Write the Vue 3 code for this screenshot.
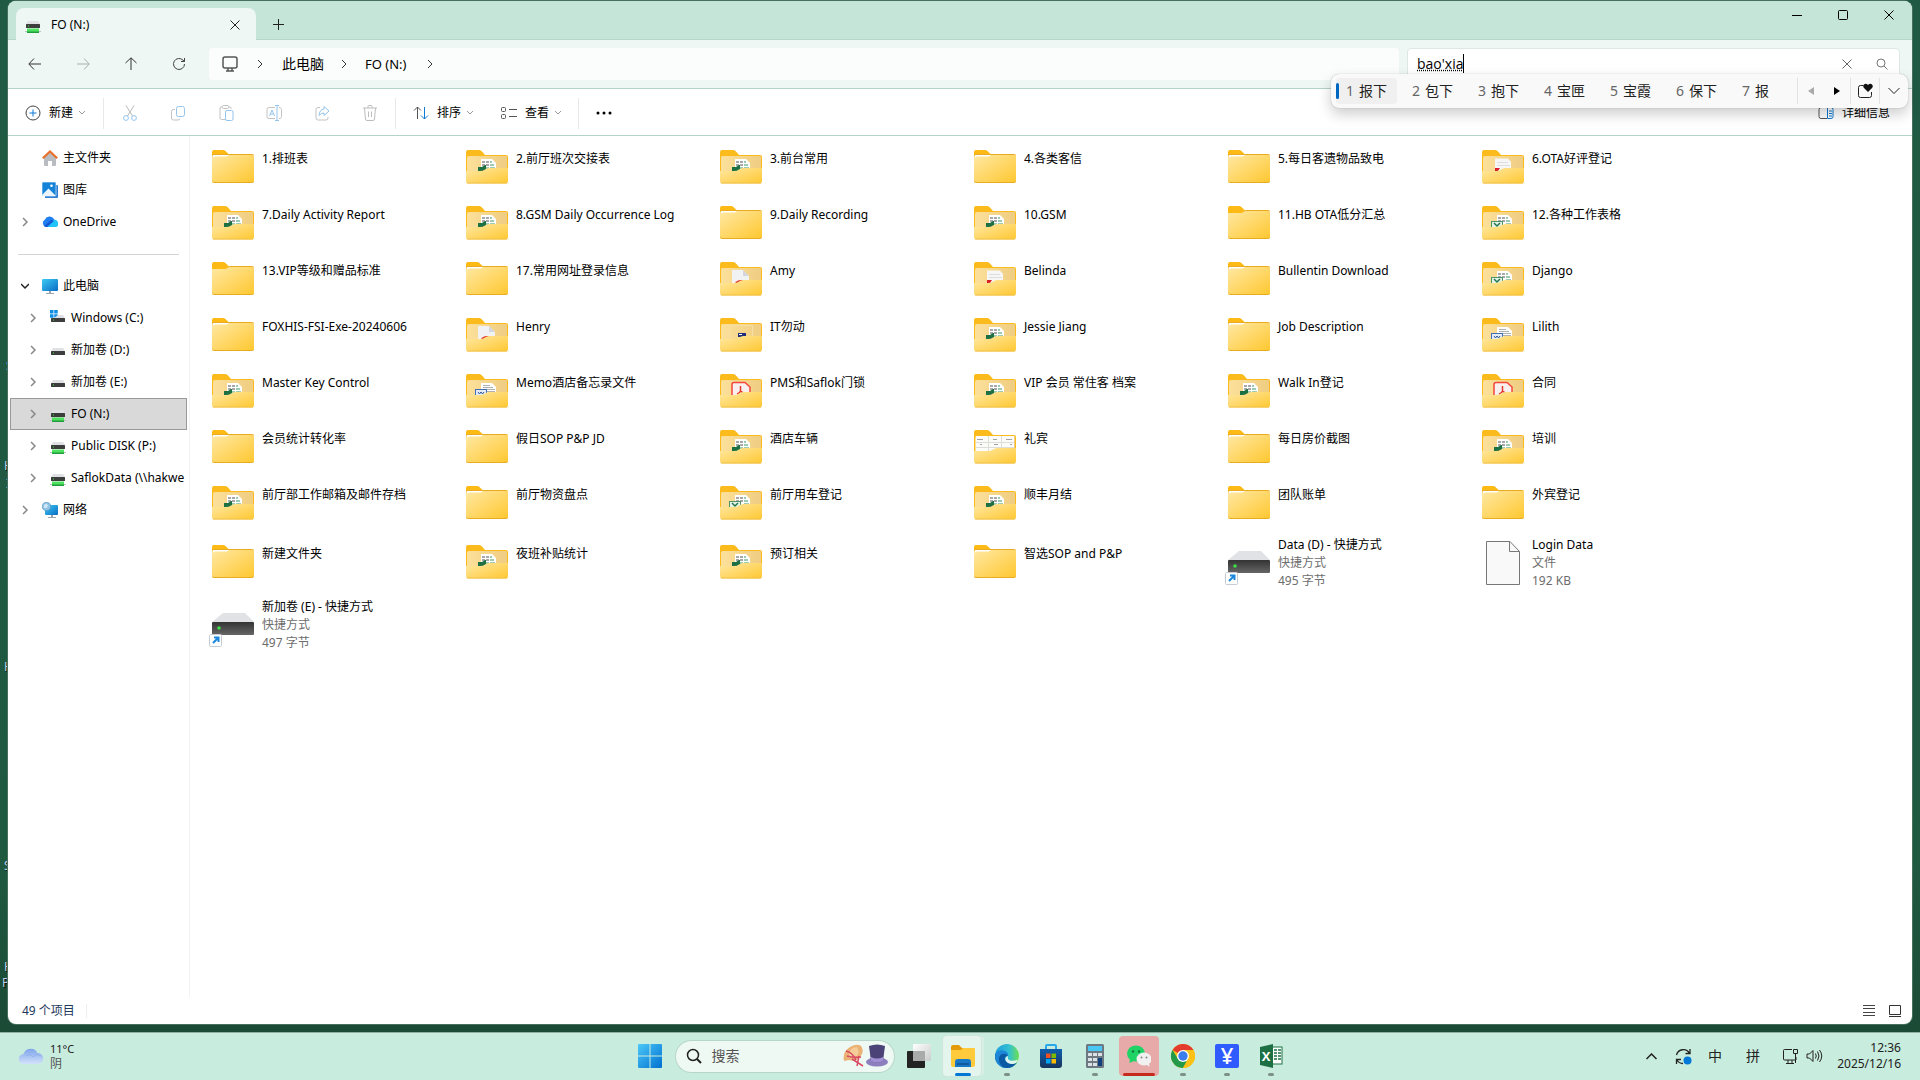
<script setup>
import { ref } from 'vue'

const query = ref("bao'xia")

const candidates = ['报下', '包下', '抱下', '宝匣', '宝霞', '保下', '报']

const places = [
  { name: '主文件夹', icon: 'home' },
  { name: '图库', icon: 'gallery' },
  { name: 'OneDrive', icon: 'onedrive', branch: true }
]

const tree = [
  { name: '此电脑', icon: 'pc', open: true },
  { name: 'Windows (C:)', icon: 'disk-win', child: true },
  { name: '新加卷 (D:)', icon: 'disk', child: true },
  { name: '新加卷 (E:)', icon: 'disk', child: true },
  { name: 'FO (N:)', icon: 'disk-net', child: true, active: true },
  { name: 'Public DISK (P:)', icon: 'disk-net', child: true },
  { name: 'SaflokData (\\\\hakwe', icon: 'disk-net', child: true },
  { name: '网络', icon: 'network' }
]

const files = [
  ['1.排班表', 'paper'], ['2.前厅班次交接表', 'xls'], ['3.前台常用', 'xls'],
  ['4.各类客信', 'paper'], ['5.每日客遗物品致电', 'paper'], ['6.OTA好评登记', 'red'],
  ['7.Daily Activity Report', 'xls'], ['8.GSM Daily Occurrence Log', 'xls'], ['9.Daily Recording', 'paper'],
  ['10.GSM', 'xls'], ['11.HB OTA低分汇总', 'empty'], ['12.各种工作表格', 'xlsx'],
  ['13.VIP等级和赠品标准', 'empty'], ['17.常用网址登录信息', 'paper'], ['Amy', 'pdf'],
  ['Belinda', 'red'], ['Bullentin Download', 'paper'], ['Django', 'xlsx'],
  ['FOXHIS-FSI-Exe-20240606', 'paper'], ['Henry', 'pdf'], ['IT勿动', 'exe'],
  ['Jessie Jiang', 'xls'], ['Job Description', 'paper'], ['Lilith', 'doc'],
  ['Master Key Control', 'xls'], ['Memo酒店备忘录文件', 'doc'], ['PMS和Saflok门锁', 'acrobat'],
  ['VIP 会员 常住客 档案', 'xls'], ['Walk In登记', 'xls'], ['合同', 'acrobat'],
  ['会员统计转化率', 'paper'], ['假日SOP P&P JD', 'paper'], ['酒店车辆', 'xls'],
  ['礼宾', 'sheet'], ['每日房价截图', 'paper'], ['培训', 'xls'],
  ['前厅部工作邮箱及邮件存档', 'xls'], ['前厅物资盘点', 'paper'], ['前厅用车登记', 'xlsx'],
  ['顺丰月结', 'xls'], ['团队账单', 'paper'], ['外宾登记', 'paper'],
  ['新建文件夹', 'paper'], ['夜班补贴统计', 'xls'], ['预订相关', 'xls'],
  ['智选SOP and P&P', 'paper'],
  ['Data (D) - 快捷方式', 'drive', '快捷方式', '495 字节'],
  ['Login Data', 'file', '文件', '192 KB'],
  ['新加卷 (E) - 快捷方式', 'drive', '快捷方式', '497 字节']
].map(([name, kind, type, size]) => ({ name, kind, type, size }))

const plain = ['paper', 'empty']
const isFolder = (kind) => kind !== 'drive' && kind !== 'file'

const apps = [
  { id: 'explorer', label: '文件资源管理器', state: 'current' },
  { id: 'edge', label: 'Edge', state: 'running' },
  { id: 'store', label: 'Microsoft Store', state: '' },
  { id: 'calc', label: '计算器', state: 'running' },
  { id: 'wechat', label: '微信', state: 'alert' },
  { id: 'chrome', label: 'Chrome', state: 'running' },
  { id: 'yen', label: '收银', state: 'running' },
  { id: 'excel', label: 'Excel', state: 'running' }
]

const edits = ['cut', 'copy', 'paste', 'rename', 'share', 'delete']
const editLabels = ['剪切', '复制', '粘贴', '重命名', '共享', '删除']
</script>

<template>
  <svg class="sprite" aria-hidden="true">
    <defs>
      <linearGradient id="gFront" x1="0" y1="0" x2="1" y2="1">
        <stop offset="0" stop-color="#ffe8a3" /><stop offset="1" stop-color="#ffc831" />
      </linearGradient>
      <linearGradient id="gInner" x1="0" y1="0" x2="1" y2="0">
        <stop offset="0" stop-color="#fce09a" /><stop offset="1" stop-color="#efcd82" />
      </linearGradient>
      <linearGradient id="gDark" x1="0" y1="0" x2="0" y2="1">
        <stop offset="0" stop-color="#333" /><stop offset="1" stop-color="#666" />
      </linearGradient>
      <linearGradient id="gBlue" x1="0" y1="0" x2="1" y2="1">
        <stop offset="0" stop-color="#3ccbf4" /><stop offset="1" stop-color="#0a6cc4" />
      </linearGradient>
      <linearGradient id="gWin" x1="0" y1="0" x2="1" y2="1">
        <stop offset="0" stop-color="#4cc8f8" /><stop offset="1" stop-color="#0070d0" />
      </linearGradient>
      <linearGradient id="gCloud" x1="0" y1="0" x2="0" y2="1">
        <stop offset="0" stop-color="#7ea4ea" /><stop offset="1" stop-color="#d3e2fb" />
      </linearGradient>
      <linearGradient id="gEdge" x1="0" y1="0" x2="1" y2="0">
        <stop offset="0" stop-color="#1d9be0" /><stop offset="0.6" stop-color="#35c1d0" /><stop offset="1" stop-color="#6be04e" />
      </linearGradient>
      <linearGradient id="gStore" x1="0" y1="0" x2="0" y2="1">
        <stop offset="0" stop-color="#0f5fae" /><stop offset="1" stop-color="#17335c" />
      </linearGradient>
      <linearGradient id="gGrey" x1="0" y1="0" x2="1" y2="1">
        <stop offset="0" stop-color="#fff" /><stop offset="1" stop-color="#c9cccc" />
      </linearGradient>
    </defs>

    <symbol id="k-xls" viewBox="0 0 42 34">
      <path d="M15 9H26L30 13V22H15Z" fill="#fff" />
      <path d="M16 11h3v2h-3zM20 11h3v2h-3zM16 14h3v2h-3zM20 14h3v2h-3z" fill="#a8a8a8" />
      <path d="M24 11h2v2h-2zM24 14h4v2h-4zM20 17h3v2h-3zM24 17h5v2h-5zM20 20h9v1h-9z" fill="#9ccbb0" />
      <path d="M12 17H16L19 15H20V21H12Z" fill="#1d7044" />
    </symbol>
    <symbol id="k-xlsx" viewBox="0 0 42 34">
      <path d="M15 9H26L30 13V22H15Z" fill="#fff" />
      <path d="M16 11h3v2h-3zM20 11h3v2h-3zM16 14h3v2h-3zM20 14h3v2h-3z" fill="#a8a8a8" />
      <path d="M24 11h2v2h-2zM24 14h4v2h-4zM24 17h5v2h-5z" fill="#9ccbb0" />
      <rect x="9.500" y="15.500" width="11" height="7" fill="#e4f2ea" stroke="#4c9468" />
      <path d="M12 17l3 3 3-3" stroke="#24774a" stroke-width="1.500" fill="none" />
    </symbol>
    <symbol id="k-doc" viewBox="0 0 42 34">
      <path d="M15 9H26L30 13V22H15Z" fill="#fff" />
      <path d="M17 11.500h7M17 13.500h10M17 15.500h12M21 17.500h8" stroke="#b0b0b0" />
      <rect x="9.500" y="15.500" width="11" height="7" fill="#e3ebf8" stroke="#456fb5" />
      <path d="M12 18l1.500 2 1.500-2 1.500 2 1.500-2" stroke="#2b579a" fill="none" />
    </symbol>
    <symbol id="k-red" viewBox="0 0 42 34">
      <path d="M13 8.500H26L29 12V22H13Z" fill="#f6f6f6" />
      <path d="M15 12.500h11M15 15.500h13" stroke="#dedede" />
      <path d="M13 18H18L16 21H13Z" fill="#d81e26" />
    </symbol>
    <symbol id="k-pdf" viewBox="0 0 42 34">
      <path d="M12 8H23L29 14V22H12Z" fill="#f1f2f3" />
      <path d="M23 8L29 14H23Z" fill="#d3d6da" />
      <path d="M15 22a6 4 0 0 1 12 0z" fill="#e2382c" />
    </symbol>
    <symbol id="k-acrobat" viewBox="0 0 42 34">
      <path d="M12 22V10.500Q12 8.500 14 8.500H25L30 13V22" fill="#f9efee" stroke="#f3483b" stroke-width="1.500" />
      <path d="M20.500 12v5M17 20q3-1 3.500-3q2 2 4 2" stroke="#e23a30" stroke-width="1.500" fill="none" />
    </symbol>
    <symbol id="k-exe" viewBox="0 0 42 34">
      <path d="M9.500 20V7.500H32.500V20" fill="none" stroke="#f5dfa5" />
      <rect x="18" y="15" width="8" height="4" fill="#1f2f78" />
      <path d="M19 16.500h3" stroke="#fff" />
    </symbol>
    <symbol id="k-sheet" viewBox="0 0 42 34">
      <rect x="2" y="6" width="38" height="16" fill="#fbfbfa" />
      <path d="M2 12.500H40M2 17.500H40M14.500 6V22M27.500 6V22" stroke="#deded9" />
      <path d="M3 9.500h6M19 9.500h4M32 9.500h6M6 14.500h2M20 14.500h4M36 14.500h2" stroke="#a3a3a3" />
    </symbol>

    <symbol id="s-home" viewBox="0 0 16 16">
      <path d="M2 7L8 2L14 7V15Q14 16 13 16H10V11H6V16H3Q2 16 2 15Z" fill="#b9bcc0" />
      <path d="M0.800 8.200L8 1.500L15.200 8.200" fill="none" stroke="#e8702a" stroke-width="2.200" />
    </symbol>
    <symbol id="s-gallery" viewBox="0 0 16 16">
      <path d="M3 3H15Q16 3 16 4V15Q16 16 15 16H3Z" fill="#2d7dd2" />
      <rect width="14" height="14" rx="1" fill="#1583d8" stroke="#fff" stroke-width="0.600" />
      <path d="M0 13L6.500 6.500L13.500 13.500Q13 14 12 14H1Z" fill="#e9f5fe" />
      <circle cx="9.500" cy="3.800" r="1.300" fill="#fff" />
    </symbol>
    <symbol id="s-onedrive" viewBox="0 0 16 16">
      <path d="M4 13A4 4 0 0 1 3 5.500A5 5 0 0 1 12 5L13 7A3.200 3.200 0 0 1 13 13Z" fill="#1f7ff0" />
      <path d="M5 13L11 6.200A3.600 3.600 0 0 1 14 13Z" fill="#22c3f6" />
      <path d="M2 12L9 6Q11 6 12 7L5 13Q3 13 2 12Z" fill="#1558d8" />
    </symbol>
    <symbol id="s-pc" viewBox="0 0 16 16">
      <rect y="1" width="16" height="12" rx="1" fill="url(#gBlue)" />
      <path d="M7 13h2v2H7zM4 15h8v1H4z" fill="#9aa4ad" />
    </symbol>
    <symbol id="s-disk" viewBox="0 0 16 16">
      <path d="M3 6H13L15 9H1Z" fill="#dfe1e4" />
      <rect x="1" y="9" width="14" height="4" rx="0.500" fill="#3d3d3d" />
      <rect x="3" y="10.500" width="1" height="1" fill="#35e04a" />
    </symbol>
    <symbol id="s-disk-win" viewBox="0 0 16 16">
      <path d="M0 0h3.500v3.500H0zM4.200 0h3.500v3.500H4.200zM0 4.200h3.500v3.500H0zM4.200 4.200h3.500v3.500H4.200z" fill="#0f8fe6" />
      <path d="M8 5H13L15 8H4Z" fill="#dfe1e4" />
      <rect x="1" y="8" width="14" height="4" rx="0.500" fill="#3d3d3d" />
      <rect x="3" y="9.500" width="1" height="1" fill="#35e04a" />
    </symbol>
    <symbol id="s-disk-net" viewBox="0 0 16 16">
      <path d="M3 4H13L15 7H1Z" fill="#dfe1e4" />
      <rect x="1" y="7" width="14" height="4" rx="0.500" fill="#3d3d3d" />
      <rect x="3" y="8.500" width="1" height="1" fill="#35e04a" />
      <path d="M0 14h16v1H0z" fill="#b6c4b8" />
      <rect x="2" y="11.500" width="12" height="4.500" fill="#4fe262" />
      <rect x="2" y="14.500" width="12" height="1.500" fill="#1f9c3c" />
    </symbol>
    <symbol id="s-network" viewBox="0 0 16 16">
      <rect x="3" y="3" width="13" height="10" rx="1" fill="url(#gBlue)" />
      <path d="M9 13h2v2H9zM6 15h8v1H6z" fill="#9aa4ad" />
      <circle cx="4.500" cy="4.500" r="4.300" fill="#8fc3e6" stroke="#4a8ab8" stroke-width="0.600" />
      <path d="M2 3q2-2 4 0l-1 3-3 0z" fill="#cfe6f4" />
    </symbol>

    <symbol id="c-cut" viewBox="0 0 16 16">
      <path d="M4 0.500L10.500 11M12 0.500L5.500 11" stroke="#b9b9b9" fill="none" />
      <circle cx="4" cy="13" r="2.400" stroke="#93c5ee" fill="none" /><circle cx="12" cy="13" r="2.400" stroke="#93c5ee" fill="none" />
    </symbol>
    <symbol id="c-copy" viewBox="0 0 16 16">
      <path d="M5 4.500H3.500a2 2 0 0 0-2 2V13a2 2 0 0 0 2 2H8a2 2 0 0 0 2-1.500" stroke="#c2c2c2" fill="none" />
      <rect x="6.500" y="1.500" width="8" height="10" rx="2" stroke="#93c5ee" fill="#fff" />
    </symbol>
    <symbol id="c-paste" viewBox="0 0 16 16">
      <path d="M7 14.500H3.500a1.500 1.500 0 0 1-1.500-1.500V3a1 1 0 0 1 1-1H12a1 1 0 0 1 1 1V4" stroke="#c2c2c2" fill="none" />
      <rect x="4.500" y="0.500" width="6" height="3" rx="1" stroke="#c2c2c2" fill="#fff" />
      <rect x="7.500" y="5.500" width="7.500" height="10" rx="1.500" stroke="#93c5ee" fill="#fff" />
    </symbol>
    <symbol id="c-rename" viewBox="0 0 16 16">
      <path d="M9 2.500H3a2 2 0 0 0-2 2v7a2 2 0 0 0 2 2H9M13 2.500a2 2 0 0 1 2.500 2v7a2 2 0 0 1-2.500 2" stroke="#c2c2c2" fill="none" />
      <path d="M3.500 11L6 5L8.500 11M4.500 9H7.500M11 0.500V15.500M9 0.500H13M9 15.500H13" stroke="#93c5ee" fill="none" />
    </symbol>
    <symbol id="c-share" viewBox="0 0 16 16">
      <path d="M6 2.500H4a2 2 0 0 0-2 2V13a2 2 0 0 0 2 2h8a2 2 0 0 0 2-2V12" stroke="#c2c2c2" fill="none" />
      <path d="M10 1.500L15 6L10 10.500V8Q7 8 5 10.500Q5.500 4.500 10 4Z" stroke="#93c5ee" fill="none" stroke-linejoin="round" />
    </symbol>
    <symbol id="c-delete" viewBox="0 0 16 16">
      <path d="M1 3H15M6 3V1.500Q6 0.500 7 0.500H9Q10 0.500 10 1.500V3M2.500 3L3.500 14Q3.700 15.500 5 15.500H11Q12.300 15.500 12.500 14L13.500 3M6.500 6.500V12M9.500 6.500V12" stroke="#bdbdbd" fill="none" />
    </symbol>

    <symbol id="a-explorer" viewBox="0 0 24 24">
      <path d="M0 3Q0 1 2 1H8L11 4H21V12H0Z" fill="#e39b0b" />
      <path d="M0 6H10L12 4H23Q24 4 24 5V21Q24 23 22 23H2Q0 23 0 21Z" fill="#ffcb3d" />
      <path d="M4 23V18Q4 15 7 15H17Q20 15 20 18V23Z" fill="#1878c8" />
      <path d="M6 19H18V21H6Z" fill="#115a9c" />
    </symbol>
    <symbol id="a-edge" viewBox="0 0 24 24">
      <circle cx="12" cy="12" r="12" fill="url(#gEdge)" />
      <path d="M0 12Q1 7 6.500 7Q13 7 13 12Q9 12 10 16Q12 20 18 20Q20 20 22 18.500Q18 24 12 24A12 12 0 0 1 0 12Z" fill="#0c59a4" />
      <path d="M1 9Q4 5 10 7Q14 9 13 12Q11 9 7 10Q3 12 4 17Q5 22 10 24Q1 22 0 13Z" fill="#1b87d6" />
      <path d="M13 12Q12 15 15 16.500Q19 17.500 23 15.500Q22 19 18 20Q12 20 10.500 16Q10 13 13 12Z" fill="#e6f5f0" />
    </symbol>
    <symbol id="a-store" viewBox="0 0 24 24">
      <path d="M7 6V2Q7 1 8 1H16Q17 1 17 2V6" fill="none" stroke="#29a9ea" stroke-width="2" />
      <path d="M1 5H23V21Q23 24 20 24H4Q1 24 1 21Z" fill="url(#gStore)" />
      <path d="M7 9.500h4.500v4.500H7z" fill="#f25022" /><path d="M12.500 9.500H17v4.500h-4.500z" fill="#7fba00" />
      <path d="M7 15h4.500v4.500H7z" fill="#00a4ef" /><path d="M12.500 15H17v4.500h-4.500z" fill="#ffb900" />
    </symbol>
    <symbol id="a-calc" viewBox="0 0 24 24">
      <rect x="3" width="18" height="24" rx="1.500" fill="#6d7880" />
      <rect x="5" y="2" width="14" height="5" fill="#49c7f4" />
      <path d="M5 9h4v3H5zM10 9h4v3h-4zM15 9h4v3h-4zM5 14h4v3H5zM10 14h4v3h-4zM5 19h4v3H5zM10 19h4v3h-4z" fill="#dbe1e4" />
      <rect x="15" y="14" width="4" height="8" fill="#11407c" />
    </symbol>
    <symbol id="a-wechat" viewBox="0 0 24 24">
      <ellipse cx="9" cy="9.500" rx="9" ry="8" fill="#1fd366" /><path d="M3 14L2.500 19L8 16.500Z" fill="#1fd366" />
      <circle cx="6" cy="7.500" r="1.200" fill="#0c7a3a" /><circle cx="12" cy="7.500" r="1.200" fill="#0c7a3a" />
      <ellipse cx="17" cy="15" rx="7.500" ry="6.500" fill="#f1f1f1" /><path d="M19 20L22.500 23L22 18Z" fill="#f1f1f1" />
      <circle cx="14.500" cy="13.500" r="1" fill="#888" /><circle cx="19.500" cy="13.500" r="1" fill="#888" />
    </symbol>
    <symbol id="a-chrome" viewBox="0 0 24 24">
      <circle cx="12" cy="12" r="12" fill="#fbc116" />
      <path d="M12 12L1.600 6A12 12 0 0 1 22.400 6Z" fill="#e33b2e" />
      <path d="M1.600 6A12 12 0 0 0 12 24L17 15L12 12L7 15Z" fill="#229a4a" />
      <path d="M12 6H22.400A12 12 0 0 1 12 24L17.500 14Z" fill="#fbc116" />
      <circle cx="12" cy="12" r="6" fill="#fff" /><circle cx="12" cy="12" r="4.700" fill="#3b7ded" />
    </symbol>
    <symbol id="a-yen" viewBox="0 0 24 24">
      <rect width="24" height="24" rx="2" fill="#2f5bff" />
    </symbol>
    <symbol id="a-excel" viewBox="0 0 24 24">
      <rect x="12" y="3" width="11" height="17" fill="#fff" stroke="#1d7044" />
      <path d="M15 6h3M19 6h3M15 9h3M19 9h3M15 12h3M19 12h3M15 15h3M19 15h3" stroke="#1d7044" stroke-width="1.500" />
      <path d="M1 3L14 0V24L1 21Z" fill="#1d7044" />
    </symbol>
  </svg>

  <div class="desktop">
    <div class="wallpaper-labels" aria-hidden="true">
      <span class="lb l1">S</span><span class="lb l2">H</span><span class="lb l3">I</span>
      <span class="lb l4">H</span><span class="lb l5">S</span><span class="lb l6">H</span><span class="lb l7">P</span>
    </div>

    <main class="window">
      <header class="titlebar">
        <div class="tab">
          <svg width="16" height="16"><use href="#s-disk-net" /></svg>
          <span class="tab-name">FO (N:)</span>
          <button class="icon-btn tab-close" aria-label="关闭标签页">
            <svg width="10" height="10" viewBox="0 0 10 10"><path d="M0.500 0.500L9.500 9.500M9.500 0.500L0.500 9.500" stroke="#222" fill="none" /></svg>
          </button>
        </div>
        <button class="icon-btn new-tab" aria-label="新标签页">
          <svg width="11" height="11" viewBox="0 0 11 11"><path d="M5.500 0V11M0 5.500H11" stroke="#222" fill="none" /></svg>
        </button>
        <div class="caption">
          <button class="icon-btn" aria-label="最小化"><svg width="10" height="10" viewBox="0 0 10 10"><path d="M0 5.500H10" stroke="#000" /></svg></button>
          <button class="icon-btn" aria-label="最大化"><svg width="10" height="10" viewBox="0 0 10 10"><rect x="0.500" y="0.500" width="9" height="9" rx="1" stroke="#000" fill="none" /></svg></button>
          <button class="icon-btn" aria-label="关闭"><svg width="10" height="10" viewBox="0 0 10 10"><path d="M0.500 0.500L9.500 9.500M9.500 0.500L0.500 9.500" stroke="#000" fill="none" /></svg></button>
        </div>
      </header>

      <nav class="navbar">
        <div class="nav-buttons">
          <button class="icon-btn" aria-label="后退"><svg width="14" height="14" viewBox="0 0 14 14"><path d="M13 7H1M6 1.500L0.800 7L6 12.500" stroke="#333" fill="none" /></svg></button>
          <button class="icon-btn" aria-label="前进"><svg width="14" height="14" viewBox="0 0 14 14"><path d="M1 7H13M8 1.500L13.200 7L8 12.500" stroke="#aab0ad" fill="none" /></svg></button>
          <button class="icon-btn" aria-label="向上"><svg width="14" height="14" viewBox="0 0 14 14"><path d="M7 13V1M1.500 6L7 0.800L12.500 6" stroke="#333" fill="none" /></svg></button>
          <button class="icon-btn" aria-label="刷新"><svg width="14" height="14" viewBox="0 0 14 14"><path d="M12.500 7A5.500 5.500 0 1 1 11 3.200L12.500 4.500M12.500 1V4.500H9" stroke="#444" fill="none" /></svg></button>
        </div>
        <div class="address">
          <svg width="16" height="16" viewBox="0 0 16 16"><rect x="1" y="1" width="14" height="11" rx="2" stroke="#555" stroke-width="1.500" fill="none" /><path d="M6 12V14.500M10 12V14.500M4 15H12" stroke="#555" stroke-width="1.500" /></svg>
          <svg class="crumb-arrow" width="6" height="10" viewBox="0 0 6 10"><path d="M1 1L5 5L1 9" stroke="#333" fill="none" /></svg>
          <a class="crumb" href="#">此电脑</a>
          <svg class="crumb-arrow" width="6" height="10" viewBox="0 0 6 10"><path d="M1 1L5 5L1 9" stroke="#333" fill="none" /></svg>
          <a class="crumb latin" href="#">FO (N:)</a>
          <svg class="crumb-arrow" width="6" height="10" viewBox="0 0 6 10"><path d="M1 1L5 5L1 9" stroke="#333" fill="none" /></svg>
        </div>
        <div class="search">
          <input v-model="query" aria-label="搜索" type="text" spellcheck="false" />
          <span class="caret"></span>
          <button class="icon-btn" aria-label="清除"><svg width="10" height="10" viewBox="0 0 10 10"><path d="M0.500 0.500L9.500 9.500M9.500 0.500L0.500 9.500" stroke="#666" fill="none" /></svg></button>
          <button class="icon-btn" aria-label="开始搜索"><svg width="12" height="12" viewBox="0 0 12 12"><circle cx="5" cy="5" r="4" stroke="#777" fill="none" /><path d="M8 8L11.500 11.500" stroke="#777" /></svg></button>
        </div>
      </nav>

      <section class="commands">
        <button class="cmd new">
          <svg width="16" height="16" viewBox="0 0 16 16"><circle cx="8" cy="8" r="7" stroke="#444" fill="none" /><path d="M8 4.500V11.500M4.500 8H11.500" stroke="#0f7ad4" /></svg>
          <span>新建</span>
          <svg class="down" width="8" height="6" viewBox="0 0 8 6"><path d="M1 1L4 4L7 1" stroke="#999" fill="none" /></svg>
        </button>
        <i class="rule"></i>
        <div class="edit-group">
          <button v-for="(id, i) in edits" :key="id" class="icon-btn" :aria-label="editLabels[i]" disabled>
            <svg width="16" height="16"><use :href="'#c-' + id" /></svg>
          </button>
        </div>
        <i class="rule"></i>
        <button class="cmd">
          <svg width="16" height="14" viewBox="0 0 16 14"><path d="M4.500 13V1M1 4.500L4.500 1L8 4.500" stroke="#555" fill="none" /><path d="M11.500 1V13M8 9.500L11.500 13L15 9.500" stroke="#0f7ad4" fill="none" /></svg>
          <span>排序</span>
          <svg class="down" width="8" height="6" viewBox="0 0 8 6"><path d="M1 1L4 4L7 1" stroke="#999" fill="none" /></svg>
        </button>
        <button class="cmd view">
          <svg width="16" height="14" viewBox="0 0 16 14"><rect x="0.500" y="1.500" width="4" height="4" rx="1" stroke="#555" fill="none" /><rect x="0.500" y="8.500" width="4" height="4" rx="1" stroke="#555" fill="none" /><path d="M8 3.500H16M8 10.500H16" stroke="#555" /></svg>
          <span>查看</span>
          <svg class="down" width="8" height="6" viewBox="0 0 8 6"><path d="M1 1L4 4L7 1" stroke="#999" fill="none" /></svg>
        </button>
        <i class="rule"></i>
        <button class="icon-btn more" aria-label="更多">
          <svg width="16" height="4" viewBox="0 0 16 4"><circle cx="2" cy="2" r="1.500" /><circle cx="8" cy="2" r="1.500" /><circle cx="14" cy="2" r="1.500" /></svg>
        </button>
        <button class="cmd details">
          <svg width="16" height="14" viewBox="0 0 16 14"><path d="M9 1.500H3a2 2 0 0 0-2 2v7a2 2 0 0 0 2 2H9" stroke="#555" fill="none" /><path d="M9.500 1.500H13a2 2 0 0 1 2 2v7a2 2 0 0 1-2 2H9.500ZM11 5h3M11 7.500h3M11 10h3" stroke="#0f7ad4" fill="none" /></svg>
          <span>详细信息</span>
        </button>
      </section>

      <div class="body">
        <aside class="sidebar">
          <ul>
            <li v-for="p in places" :key="p.name">
              <a class="node" href="#">
                <svg class="twist" width="8" height="10" viewBox="0 0 8 10"><path v-if="p.branch" d="M2 1L6 5L2 9" stroke="#888" stroke-width="1.500" fill="none" /></svg>
                <svg width="16" height="16"><use :href="'#s-' + p.icon" /></svg>
                <span>{{ p.name }}</span>
              </a>
            </li>
          </ul>
          <hr />
          <ul>
            <li v-for="n in tree" :key="n.name">
              <a class="node" :class="{ child: n.child, active: n.active }" href="#">
                <svg class="twist" width="8" height="10" viewBox="0 0 8 10">
                  <path v-if="n.open" d="M0 3L4 7L8 3" stroke="#222" stroke-width="1.500" fill="none" />
                  <path v-else d="M2 1L6 5L2 9" stroke="#888" stroke-width="1.500" fill="none" />
                </svg>
                <svg width="16" height="16"><use :href="'#s-' + n.icon" /></svg>
                <span>{{ n.name }}</span>
              </a>
            </li>
          </ul>
        </aside>

        <ul class="files">
          <li v-for="f in files" :key="f.name" :class="{ tall: f.type }">
            <a class="file" href="#">
              <span class="thumb" :class="{ folder: isFolder(f.kind) }">
                <svg v-if="plain.includes(f.kind)" width="42" height="34" viewBox="0 0 42 34">
                  <path d="M0 2Q0 0 2 0H11Q13 0 14.500 2L17 4.500V8H0Z" fill="#fdb914" />
                  <path v-if="f.kind === 'paper'" d="M0 6Q0 4 2 4H40Q42 4 42 6V31Q42 33 40 33H2Q0 33 0 31Z" fill="#e9ab22" />
                  <path v-else d="M0 7H12Q14 7 15.500 5.500Q16.500 4 18 4H40Q42 4 42 6V31Q42 33 40 33H2Q0 33 0 31Z" fill="#e9ab22" />
                  <path v-if="f.kind === 'paper'" d="M0 7Q0 5 2 5H41Q42 5 42 6V30Q42 32 40 32H2Q0 32 0 30Z" fill="url(#gFront)" />
                  <path v-else d="M0 7H12Q14 7 16 5.500Q17 5 18 5H41Q42 5 42 6V30Q42 32 40 32H2Q0 32 0 30Z" fill="url(#gFront)" />
                  <path v-if="f.kind === 'paper'" d="M1 7V6Q1 5 2 5H17L15 6.500H3Q1.500 6.500 1 8Z" fill="#fff" />
                </svg>
                <svg v-else-if="isFolder(f.kind)" width="42" height="34" viewBox="0 0 42 34">
                  <path d="M0 2Q0 0 2 0H13Q15 0 16.500 2L19 5H40Q42 5 42 7V31H0Z" fill="#fbbb1c" />
                  <path d="M1 8Q1 6 3 6H41V24H1Z" fill="url(#gInner)" />
                  <use :href="'#k-' + f.kind" width="42" height="34" />
                  <path d="M0 21H14Q17 21 19 19.500Q20 18.500 23 18H42V31Q42 33.500 40 33.500H2Q0 33.500 0 31Z" fill="url(#gFront)" />
                  <path d="M1 33H41" stroke="#f0c04a" />
                </svg>
                <svg v-else-if="f.kind === 'drive'" class="drive" width="46" height="34" viewBox="0 0 46 34">
                  <path d="M14 0H36L45 9H3Z" fill="#e0e2e5" />
                  <rect x="3" y="9" width="42" height="13" rx="1" fill="url(#gDark)" />
                  <circle cx="10" cy="15" r="1.800" fill="#3be043" />
                  <rect x="0.500" y="21.500" width="12" height="12" rx="1" fill="#fff" stroke="#c7cbd6" />
                  <path d="M4 30L9 25M5 24.500H9.500V29" stroke="#1b88dd" stroke-width="2" fill="none" />
                </svg>
                <svg v-else width="42" height="46" viewBox="0 0 42 46">
                  <path d="M4.500 1.500H28L37.500 11.500V44.500H4.500Z" fill="#f9f9f9" stroke="#777" />
                  <path d="M27.500 1.500V11.500H37.500" fill="none" stroke="#777" />
                </svg>
              </span>
              <span class="meta">
                <span class="name">{{ f.name }}</span>
                <span v-if="f.type" class="sub">{{ f.type }}</span>
                <span class="sub">{{ f.size }}</span>
              </span>
            </a>
          </li>
        </ul>
      </div>

      <footer class="status">
        <span class="count">49 个项目</span>
        <i class="count-rule"></i>
        <button class="icon-btn" aria-label="列表视图"><svg width="12" height="11" viewBox="0 0 12 11"><path d="M0 0.500H12M0 3.500H12M0 7.500H12M0 10.500H12" stroke="#444" /></svg></button>
        <button class="icon-btn" aria-label="大图标视图"><svg width="12" height="12" viewBox="0 0 12 12"><path d="M0.500 0.500H11.500V9.500H0.500ZM0 11.500H12" stroke="#333" fill="none" /></svg></button>
      </footer>

      <div class="ime">
        <ol>
          <li v-for="(c, i) in candidates" :key="i" :class="{ picked: i === 0 }">
            <button><span class="num">{{ i + 1 }}</span>{{ c }}</button>
          </li>
        </ol>
        <div class="ime-tools">
          <button class="icon-btn pg" aria-label="上一页"><svg width="6" height="8" viewBox="0 0 6 8"><path d="M6 0V8L0 4Z" fill="#aaa" /></svg></button>
          <button class="icon-btn pg" aria-label="下一页"><svg width="6" height="8" viewBox="0 0 6 8"><path d="M0 0V8L6 4Z" fill="#000" /></svg></button>
          <button class="icon-btn split" aria-label="表情">
            <svg width="16" height="16" viewBox="0 0 16 16"><path d="M6.500 2.500H3.500a2 2 0 0 0-2 2V12.500a2 2 0 0 0 2 2h9a2 2 0 0 0 2-2V9" stroke="#222" fill="none" /><path d="M11 9L7 5Q5.500 3 7 1.500Q9 0 11 2Q13 0 15 1.500Q16.500 3 15 5Z" fill="#111" /></svg>
          </button>
          <button class="icon-btn split" aria-label="展开"><svg width="12" height="8" viewBox="0 0 12 8"><path d="M0.500 1L6 6.500L11.500 1" stroke="#222" fill="none" /></svg></button>
        </div>
      </div>
    </main>

    <footer class="taskbar">
      <div class="weather">
        <svg width="24" height="16" viewBox="0 0 24 16"><path d="M5 16A5 5 0 0 1 4.500 6A7.500 7.500 0 0 1 18.500 5A5.500 5.500 0 0 1 19 16Z" fill="url(#gCloud)" /><path d="M7 8Q11 5 14 9Q17 5 22 8" stroke="#93b2ee" fill="none" /></svg>
        <div><p class="temp">11°C</p><p class="sky">阴</p></div>
      </div>

      <div class="dock">
        <button class="app" aria-label="开始">
          <svg width="24" height="24" viewBox="0 0 24 24"><path d="M0 1Q0 0 1 0H11.500V11.500H0ZM12.500 0H23Q24 0 24 1V11.500H12.500ZM0 12.500H11.500V24H1Q0 24 0 23ZM12.500 12.500H24V23Q24 24 23 24H12.500Z" fill="url(#gWin)" /></svg>
        </button>
        <button class="task-search">
          <svg width="16" height="16" viewBox="0 0 16 16"><circle cx="7" cy="7" r="5.500" stroke="#222" stroke-width="1.500" fill="none" /><path d="M11 11L15 15" stroke="#222" stroke-width="2" /></svg>
          <span>搜索</span>
          <svg class="hats" width="46" height="24" viewBox="0 0 46 24">
            <path d="M1 17Q-1 8 7 3Q14-1 18 2Q22 7 17 13Q12 18 6 16Z" fill="#eab274" />
            <path d="M6 9Q8 3 14 3Q17 8 14 12Q10 15 6 14Z" fill="#f6cd98" />
            <path d="M3 7Q9 8 13 16M4 12Q10 14 18 13M9 15L20 22M16 12L14 22" stroke="#d94a63" stroke-width="1.500" fill="none" />
            <ellipse cx="34" cy="18" rx="11" ry="4.500" fill="#8d7fbe" />
            <path d="M26 2Q34 -1 42 2L40 17Q34 20 28 17Z" fill="#4b4377" />
            <path d="M28 13Q34 16 40 13V17Q34 20 28 17Z" fill="#a290d4" />
          </svg>
        </button>
        <button class="app" aria-label="任务视图">
          <svg width="24" height="24" viewBox="0 0 24 24"><rect x="0" y="7" width="18" height="17" rx="1" fill="#232323" /><rect x="6" y="0" width="18" height="17" rx="1" fill="url(#gGrey)" /><rect x="6" y="7" width="12" height="10" fill="#a9abab" /></svg>
        </button>
        <button v-for="a in apps" :key="a.id" class="app" :class="a.state" :aria-label="a.label">
          <svg width="24" height="24" viewBox="0 0 24 24">
            <use :href="'#a-' + a.id" />
            <text v-if="a.id === 'yen'" class="yen" x="12" y="20" text-anchor="middle">¥</text>
            <text v-if="a.id === 'excel'" class="xl" x="7" y="17" text-anchor="middle">X</text>
          </svg>
          <i v-if="a.state" class="mark"></i>
        </button>
      </div>

      <div class="tray">
        <button class="icon-btn t-up" aria-label="显示隐藏的图标"><svg width="11" height="7" viewBox="0 0 11 7"><path d="M0.500 6L5.500 1L10.500 6" stroke="#222" stroke-width="1.500" fill="none" /></svg></button>
        <button class="icon-btn t-sync" aria-label="更新"><svg width="17" height="17" viewBox="0 0 17 17"><path d="M1.500 7A7 7 0 0 1 14.500 5.500M15 1V5.500H10.500M1.500 16V11.500H6M2 12Q4 15.500 8 15.500" stroke="#222" stroke-width="1.300" fill="none" /><circle cx="12.500" cy="12.500" r="4" fill="#0078d7" /></svg></button>
        <button class="glyph">中</button>
        <button class="glyph mode">拼</button>
        <button class="icon-btn t-net" aria-label="网络和音量">
          <svg width="17" height="17" viewBox="0 0 17 17"><path d="M10 1.500H2.500a1 1 0 0 0-1 1V11a1 1 0 0 0 1 1H14V9M4 15.500H12M6 12V15.500M10 12V15.500M11.500 1.500h4v4h-4zM13.500 5.500V15" stroke="#222" fill="none" /></svg>
          <svg width="17" height="14" viewBox="0 0 17 14"><path d="M1 5H3.500L7 1.500V12.500L3.500 9H1ZM9.500 4.500Q11 7 9.500 9.500M11.500 2.500Q14.500 7 11.500 11.500M13.500 1Q18 7 13.500 13" stroke="#222" fill="none" /></svg>
        </button>
        <div class="clock"><p>12:36</p><p>2025/12/16</p></div>
      </div>
    </footer>
  </div>
</template>

<style>
body {
  margin: 0;
  background: #1d4d39;
}
</style>

<style scoped>
* {
  box-sizing: border-box;
}
.sprite {
  position: absolute;
  width: 0;
  height: 0;
}
.desktop {
  position: relative;
  display: flex;
  flex-direction: column;
  gap: 8px;
  min-height: 100vh;
  padding-top: 1px;
  background: linear-gradient(180deg, #205a44 0, #1f5940 80%, #1a4632 100%);
  font-family: "Noto Sans", "Noto Sans CJK SC", sans-serif;
  font-size: 12px;
  line-height: 18px;
  color: #000;
  overflow: hidden;
}
button {
  font: inherit;
  color: inherit;
  border: 0;
  padding: 0;
  background: none;
}
a {
  color: inherit;
  text-decoration: none;
}
ul, ol {
  list-style: none;
  margin: 0;
  padding: 0;
}
p {
  margin: 0;
}
svg {
  display: block;
  flex: none;
}
.icon-btn {
  display: flex;
  align-items: center;
  justify-content: center;
}

.wallpaper-labels {
  position: absolute;
  inset: 0 auto 0 0;
  width: 8px;
  overflow: hidden;
  color: #b9d3e8;
  text-shadow: 1px 1px 1px #000;
}
.lb {
  position: absolute;
  left: 4px;
}
.l1 { top: 357px; left: 6px; }
.l2 { top: 457px; }
.l3 { top: 475px; left: 6px; }
.l4 { top: 658px; }
.l5 { top: 857px; }
.l6 { top: 958px; }
.l7 { top: 974px; left: 2px; }

.window {
  position: relative;
  flex: 1;
  display: flex;
  flex-direction: column;
  margin: 0 8px;
  background: #fff;
  border-radius: 8px;
  box-shadow: 0 0 0 1px #47705f;
}

.titlebar {
  display: flex;
  height: 39px;
  padding-left: 8px;
  background: #c6e5d9;
  border-bottom: 1px solid #b6d6ca;
  border-radius: 8px 8px 0 0;
}
.tab {
  display: flex;
  align-items: center;
  width: 240px;
  height: 32px;
  margin-top: 7px;
  padding: 1px 16px 0 9px;
  background: #eef7f3;
  border-radius: 8px 8px 0 0;
}
.tab-name {
  flex: 1;
  margin-left: 10px;
}
.new-tab {
  width: 44px;
  height: 32px;
  margin-top: 7px;
}
.caption {
  display: flex;
  margin-left: auto;
}
.caption .icon-btn {
  width: 46px;
  height: 28px;
}

.navbar {
  display: flex;
  height: 49px;
  padding: 8px 12px 8px 3px;
  background: #eef7f3;
  border-bottom: 1px solid #b4d3c8;
}
.nav-buttons {
  display: flex;
  width: 198px;
}
.nav-buttons .icon-btn {
  width: 48px;
}
.address {
  display: flex;
  align-items: center;
  flex: 1;
  height: 32px;
  padding-left: 13px;
  background: #fbfdfc;
  border-radius: 4px;
  font-size: 14px;
}
.crumb-arrow {
  margin: 0 19px;
}
.crumb + .crumb-arrow {
  margin: 0 18px 0 17px;
}
.crumb {
  white-space: nowrap;
}
.latin {
  font-size: 13px;
}
.latin + .crumb-arrow {
  margin-left: 21px;
}
.search {
  position: relative;
  display: flex;
  align-items: center;
  width: 493px;
  height: 32px;
  margin-left: 8px;
  padding: 0 0 0 9px;
  background: #fff;
  border: 1px solid #dde8e3;
  border-radius: 4px;
}
.search input {
  flex: 1;
  min-width: 0;
  padding: 0;
  border: 0;
  outline: 0;
  background: none;
  font: 14px/20px "Open Sans", sans-serif;
  text-decoration: underline dotted;
}
.caret {
  position: absolute;
  left: 55px;
  top: 5px;
  width: 1px;
  height: 19px;
  background: #000;
}
.search .icon-btn {
  width: 35px;
  height: 30px;
}

.commands {
  display: flex;
  align-items: center;
  height: 47px;
  padding: 2px 22px 0 17px;
  border-bottom: 1px solid #b4d3c8;
}
.cmd {
  display: flex;
  align-items: center;
  gap: 8px;
  white-space: nowrap;
}
.down {
  margin-left: -3px;
}
.rule {
  width: 1px;
  height: 31px;
  background: #e8e8e8;
}
.cmd.new {
  width: 78px;
}
.edit-group {
  display: flex;
  padding: 0 1px 0 2px;
}
.edit-group .icon-btn {
  width: 48px;
}
.rule + .cmd {
  margin-left: 17px;
}
.view {
  margin: 0 16px 0 27px;
}
.more {
  width: 49px;
}
.details {
  margin-left: auto;
}

.body {
  display: flex;
  flex: 1;
}
.sidebar {
  width: 182px;
  flex: none;
  padding: 6px 2px;
  border-right: 1px solid #f2f2f2;
}
.sidebar hr {
  height: 1px;
  margin: 16px 8px 15px;
  border: 0;
  background: #d4d4d4;
}
.node {
  display: flex;
  align-items: center;
  height: 32px;
  padding-left: 10px;
  border: 1px solid transparent;
  white-space: nowrap;
  overflow: hidden;
}
.node.child {
  padding-left: 18px;
}
.node.active {
  background: #d9d9d9;
  border-color: #999;
}
.node .twist {
  margin-right: 13px;
}
.node span {
  margin-left: 5px;
}

.files {
  flex: 1;
  display: grid;
  grid-template-columns: repeat(auto-fill, 254px);
  align-content: start;
  padding: 4px 0 0 22px;
}
.files li {
  display: flex;
  align-items: center;
  min-height: 56px;
}
.files .tall {
  min-height: 62px;
}
.file {
  display: flex;
  align-items: center;
  gap: 8px;
}
.thumb {
  display: flex;
  width: 42px;
}
.thumb.folder {
  margin-bottom: 2px;
}
.drive {
  margin: 10px 0 0 -3px;
}
.meta {
  display: flex;
  flex-direction: column;
  white-space: nowrap;
}
.name, .sub {
  min-height: 18px;
}
.sub {
  color: #6d6d6d;
}

.status {
  display: flex;
  align-items: center;
  height: 27px;
  padding: 0 4px 0 14px;
  color: #1e395b;
}
.count-rule {
  width: 1px;
  height: 14px;
  margin: 0 auto 0 11px;
  background: #eee;
}
.status .icon-btn {
  width: 26px;
  height: 20px;
}

.ime {
  position: absolute;
  top: 73px;
  right: 4px;
  display: flex;
  width: 577px;
  height: 34px;
  padding: 4px 0 4px 5px;
  background: #f9f9f9;
  border-radius: 8px;
  box-shadow: 0 0 1px rgba(0, 0, 0, 0.35), 0 6px 14px rgba(0, 0, 0, 0.2);
  font-size: 14px;
}
.ime ol {
  display: flex;
  gap: 5px;
}
.ime li {
  position: relative;
  display: flex;
  width: 61px;
  border-radius: 4px;
}
.ime li button {
  display: flex;
  align-items: center;
  gap: 5px;
  padding-left: 10px;
  color: #222;
}
.ime .num {
  width: 8px;
  color: #666;
}
.ime .picked {
  background: #f0f0f0;
}
.ime .picked::before {
  content: "";
  position: absolute;
  inset: 5px auto 5px 0;
  width: 3px;
  border-radius: 2px;
  background: #0067c0;
}
.ime-tools {
  display: flex;
  margin-left: auto;
  border-left: 1px solid #e2e2e2;
}
.pg {
  width: 26px;
}
.split {
  width: 29px;
  border-left: 1px solid #e2e2e2;
}

.taskbar {
  display: grid;
  grid-template-columns: 1fr auto 1fr;
  align-items: center;
  height: 48px;
  padding-bottom: 1px;
  border-top: 1px solid #8fb0a2;
  background: #c8ecdd;
  color: #222;
}
.weather {
  display: flex;
  align-items: center;
  gap: 7px;
  padding-left: 19px;
  line-height: 15px;
}
.temp {
  font-size: 11px;
}
.sky {
  color: #555;
}
.dock {
  display: flex;
  align-items: center;
}
.app {
  position: relative;
  display: flex;
  align-items: center;
  justify-content: center;
  width: 44px;
  height: 40px;
}
.app.current::before, .app.alert::before {
  content: "";
  position: absolute;
  inset: 0 2px;
  border-radius: 4px;
}
.app.current::before {
  right: 4px;
  background: #e4f5ed;
  box-shadow: 0 0 0 1px #d0e5db, 3px 0 0 #d8efe5;
}
.app.alert::before {
  background: #e8aaa8;
}
.app svg {
  position: relative;
}
.yen {
  font: 500 22px "Noto Sans", sans-serif;
  fill: #fff;
}
.xl {
  font: 700 13px "Open Sans", sans-serif;
  fill: #fff;
}
.mark {
  position: absolute;
  bottom: 0;
  width: 6px;
  height: 3px;
  border-radius: 2px;
  background: #7d9187;
}
.current .mark {
  width: 16px;
  background: #0078d4;
}
.alert .mark {
  width: 32px;
  background: #c42b1c;
}
.task-search {
  display: flex;
  align-items: center;
  width: 218px;
  height: 31px;
  margin: 0 3px 0 4px;
  padding: 0 5px 0 10px;
  border-radius: 16px;
  background: #eff9f4;
  box-shadow: 0 0 0 1px #b7d6c9;
  font-size: 14px;
  color: #555;
}
.task-search span {
  margin-left: 10px;
}
.hats {
  margin-left: auto;
}
.tray {
  display: flex;
  align-items: center;
  justify-content: flex-end;
  padding-right: 19px;
}
.glyph {
  width: 32px;
  font-size: 14px;
}
.t-up, .t-sync {
  width: 32px;
}
.mode {
  margin: 0 13px 0 6px;
}
.t-net {
  gap: 7px;
}
.clock {
  width: 78px;
  line-height: 16px;
  text-align: right;
}
</style>
